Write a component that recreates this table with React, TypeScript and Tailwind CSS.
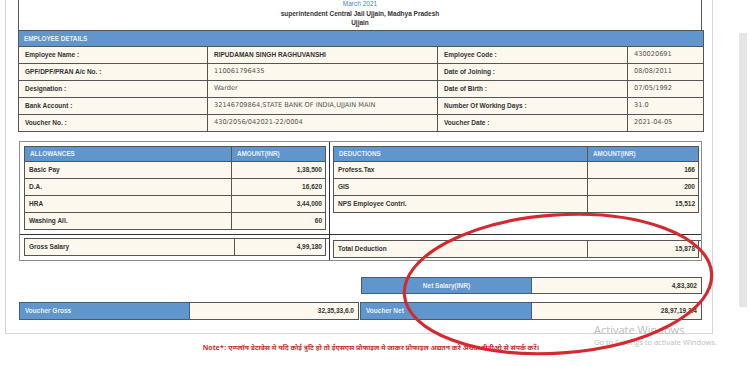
import React from "react";

const employee = [
  ["Employee Name :", "RIPUDAMAN SINGH RAGHUVANSHI", "Employee Code :", "430020691"],
  ["GPF/DPF/PRAN A/c No. :", "110061796435", "Date of Joining :", "08/08/2011"],
  ["Designation :", "Warder", "Date of Birth :", "07/05/1992"],
  ["Bank Account :", "32146709864,STATE BANK OF INDIA,UJJAIN MAIN", "Number Of Working Days :", "31.0"],
  ["Voucher No. :", "430/2056/042021-22/0004", "Voucher Date :", "2021-04-05"],
];

const allowances = [
  ["Basic Pay", "1,38,500"],
  ["D.A.", "16,620"],
  ["HRA", "3,44,000"],
  ["Washing All.", "60"],
];

const deductions = [
  ["Profess.Tax", "166"],
  ["GIS", "200"],
  ["NPS Employee Contri.", "15,512"],
];

const cell = "h-[17px] border-r border-b border-[#555] bg-[#fcf8ee] flex items-center";
const head = "h-[16px] border-r border-b border-t border-[#555] bg-[#6096cc] flex items-center pl-[5px] text-[6.3px] font-bold text-[#e9f0f8]";
const value = "font-['DejaVu_Sans',sans-serif] font-normal text-[6.6px] text-[#555]";

function AmountTable({ title, rows, cols }: { title: string; rows: string[][]; cols: string }) {
  return (
    <div className={`grid ${cols} border-l border-[#555]`}>
      <div className={head}>{title}</div>
      <div className={head}>AMOUNT(INR)</div>
      {rows.map(([name, amt]) => (
        <React.Fragment key={name}>
          <div className={`${cell} pl-[4px]`}>{name}</div>
          <div className={`${cell} justify-end pr-[3px]`}>{amt}</div>
        </React.Fragment>
      ))}
    </div>
  );
}

function TotalRow({ name, amt, cols }: { name: string; amt: string; cols: string }) {
  return (
    <div className={`grid ${cols} border-l border-t border-[#555]`}>
      <div className={`${cell} pl-[4px]`}>{name}</div>
      <div className={`${cell} justify-end pr-[3px]`}>{amt}</div>
    </div>
  );
}

export default function App() {
  return (
    <div className="relative w-[750px] h-[367px] overflow-hidden bg-white font-['Liberation_Sans',Arial,sans-serif] text-[6.5px] font-bold text-[#333]">
      <div className="flex">
        <div className="ml-[5px] w-[708px] h-[334px] border-x border-b border-[#d6d6d6] pl-[12px] pr-[10px]">
          {/* title */}
          <div className="h-[31px] border-x border-[#555] flex flex-col items-center leading-[9.5px] -mt-[1px]">
            <span className="text-[#4a86c5] font-normal">March 2021</span>
            <span>superintendent Central Jail Ujjain, Madhya Pradesh</span>
            <span>Ujjain</span>
          </div>

          {/* employee details */}
          <div className="grid grid-cols-[189px_230px_190px_76px] border-l border-[#555]">
            <div className={`${head} col-span-4 h-[17px]`}>EMPLOYEE DETAILS</div>
            {employee.map((r) => (
              <React.Fragment key={r[0]}>
                <div className={`${cell} pl-[6px]`}>{r[0]}</div>
                <div className={`${cell} pl-[6px] ${r[0] === "Employee Name :" ? "text-[6.5px]" : value}`}>{r[1]}</div>
                <div className={`${cell} pl-[6px]`}>{r[2]}</div>
                <div className={`${cell} pl-[6px] ${value}`}>{r[3]}</div>
              </React.Fragment>
            ))}
          </div>

          {/* allowances / deductions */}
          <div className="mt-[9px] ml-[1px] border border-[#8c8c8c] grid grid-cols-[310px_1fr]">
            <div className="h-[93px] border-r border-b border-[#333] pl-[4px] pt-[4px]">
              <AmountTable title="ALLOWANCES" rows={allowances} cols="grid-cols-[207px_94px]" />
            </div>
            <div className="h-[93px] border-b border-[#333] pl-[3px] pt-[4px]">
              <AmountTable title="DEDUCTIONS" rows={deductions} cols="grid-cols-[254px_111px]" />
            </div>
            <div className="h-[25px] border-r border-[#333] pl-[4px] pt-[3px]">
              <TotalRow name="Gross Salary" amt="4,99,180" cols="grid-cols-[210px_91px]" />
            </div>
            <div className="h-[25px] pl-[3px] pt-[5px]">
              <TotalRow name="Total Deduction" amt="15,878" cols="grid-cols-[254px_111px]" />
            </div>
          </div>

          {/* net salary */}
          <div className="mt-[16px] ml-[343px] flex h-[17px]">
            <div className="w-[172px] border border-[#3d5f86] bg-[#6096cc] text-[#e9f0f8] flex items-center justify-center">Net Salary(INR)</div>
            <div className="w-[171px] border border-l-0 border-[#555] bg-[#fcf8ee] flex items-center justify-end pr-[4px]">4,83,302</div>
          </div>

          {/* voucher */}
          <div className="mt-[8px] ml-[1px] flex h-[18px]">
            <div className="w-[171px] border border-[#3d5f86] bg-[#6096cc] text-[#e9f0f8] flex items-center pl-[5px]">Voucher Gross</div>
            <div className="w-[170px] border border-l-0 border-[#555] bg-[#fcf8ee] flex items-center justify-end pr-[4px]">32,35,33,6.0</div>
            <div className="w-[172px] ml-[1px] border border-[#3d5f86] bg-[#6096cc] text-[#e9f0f8] flex items-center pl-[5px]">Voucher Net</div>
            <div className="w-[171px] border border-l-0 border-[#555] bg-[#fcf8ee] flex items-center justify-end pr-[4px]">28,97,19,3.4</div>
          </div>
        </div>

        {/* scrollbar */}
        <div className="flex-1 flex justify-end pr-[3px]">
          <div className="mt-[33px] w-[8px] h-[274px] bg-[#e6e6e6]" />
        </div>
      </div>

      {/* note */}
      <p className="mt-[10px] pr-[8px] text-center text-[7px] leading-[10px] text-[#c9302c] font-['Noto_Sans_Devanagari','Lohit_Devanagari','Noto_Sans',sans-serif]">
        Note*: एम्प्लॉय डेटाबेस मे यदि कोई त्रुटि हो तो ईएसएस प्रोफाइल मे जाकर प्रोफाइल अद्यतन करे अथवा डीडीओ से संपर्क करें।
      </p>

      {/* windows watermark */}
      <div className="absolute left-[594px] top-[323px] font-['Open_Sans',sans-serif] font-normal text-[#bdbdbd] pointer-events-none">
        <div className="text-[11px] leading-[14px]">Activate Windows</div>
        <div className="text-[7.5px] leading-[10px]">Go to Settings to activate Windows.</div>
      </div>

      {/* red annotation */}
      <svg className="absolute inset-0 pointer-events-none" width="750" height="367" viewBox="0 0 750 367">
        <ellipse cx="558" cy="284" rx="154" ry="69" transform="rotate(-4 558 284)" fill="none" stroke="#d42a2f" strokeWidth="3.2" />
      </svg>
    </div>
  );
}
